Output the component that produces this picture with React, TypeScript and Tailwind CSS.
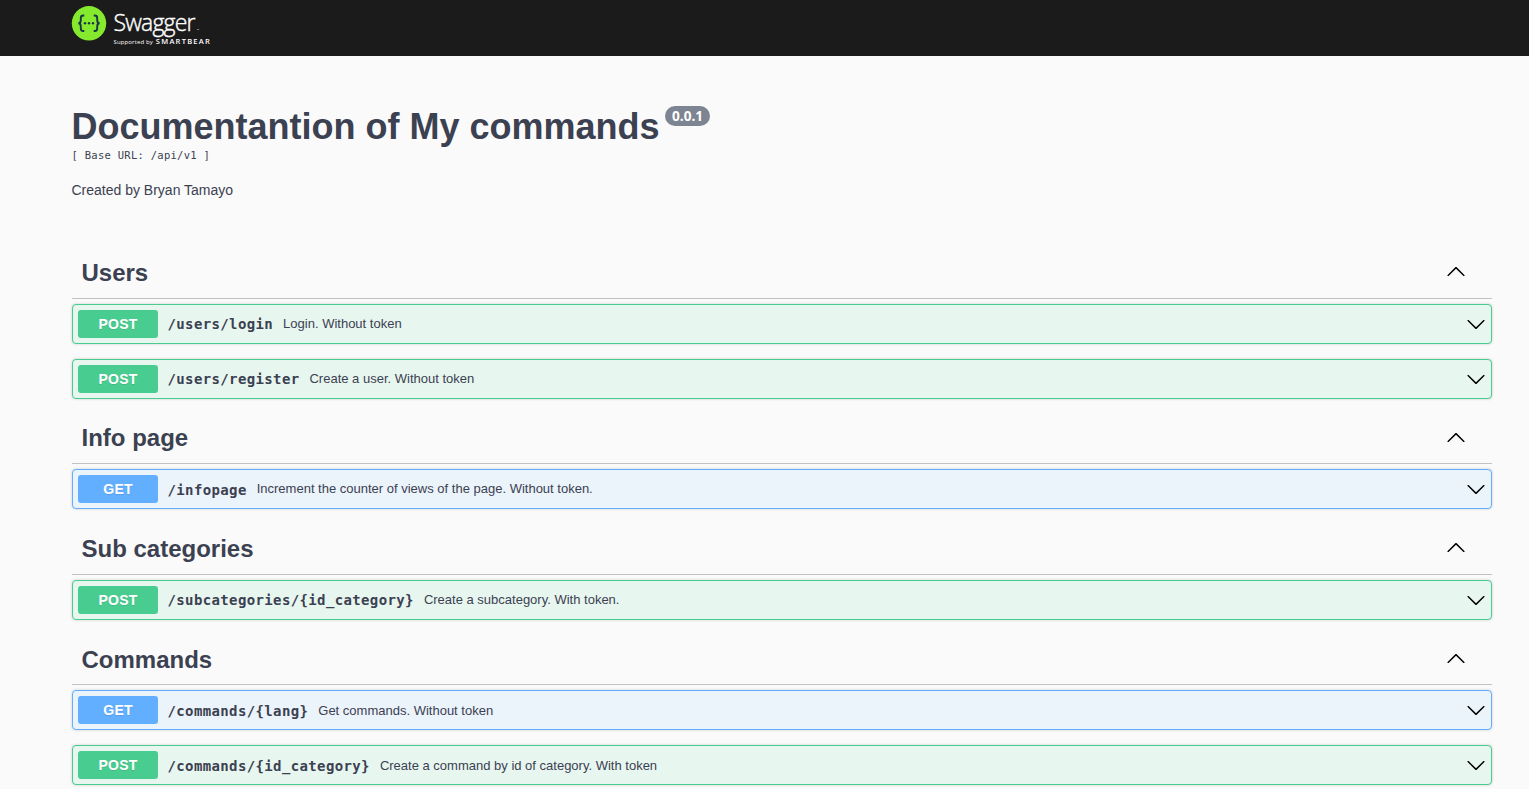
import React from 'react';

type Method = 'POST' | 'GET';
type Operation = { method: Method; path: string; summary: string };
type Section = { name: string; operations: Operation[] };

const sections: Section[] = [
  {
    name: 'Users',
    operations: [
      { method: 'POST', path: '/users/login', summary: 'Login. Without token' },
      { method: 'POST', path: '/users/register', summary: 'Create a user. Without token' },
    ],
  },
  {
    name: 'Info page',
    operations: [
      { method: 'GET', path: '/infopage', summary: 'Increment the counter of views of the page. Without token.' },
    ],
  },
  {
    name: 'Sub categories',
    operations: [
      { method: 'POST', path: '/subcategories/{id_category}', summary: 'Create a subcategory. With token.' },
    ],
  },
  {
    name: 'Commands',
    operations: [
      { method: 'GET', path: '/commands/{lang}', summary: 'Get commands. Without token' },
      { method: 'POST', path: '/commands/{id_category}', summary: 'Create a command by id of category. With token' },
    ],
  },
];

const blockStyles: Record<Method, string> = {
  POST: 'border-[#49cc90] bg-[#e8f6f0]',
  GET: 'border-[#61affe] bg-[#ebf3fb]',
};

const badgeStyles: Record<Method, string> = {
  POST: 'bg-[#49cc90]',
  GET: 'bg-[#61affe]',
};

function Arrow({ down = false }: { down?: boolean }) {
  return (
    <svg viewBox="0 0 20 20" className={down ? 'mt-0.5 size-5 shrink-0 rotate-180' : 'mb-[3px] size-5 shrink-0'} aria-hidden="true">
      <path d="M17.418 14.908C17.69 15.176 18.127 15.176 18.397 14.908C18.667 14.64 18.668 14.207 18.397 13.939L10.489 6.109C10.219 5.841 9.782 5.841 9.51 6.109L1.602 13.939C1.332 14.207 1.332 14.64 1.602 14.908C1.873 15.176 2.311 15.176 2.581 14.908L10 7.767Z" />
    </svg>
  );
}

function Logo() {
  return (
    <div className="flex items-start">
      <svg viewBox="0 0 36 36" className="-ml-px mt-[5px] size-9 shrink-0" aria-hidden="true">
        <circle cx="18" cy="18.3" r="17.2" fill="#85ea2d" />
        <g fill="none" stroke="#173647" strokeWidth="1.9">
          <path d="M13.3 10.5h-1.2c-1.7 0-2.3 1-2.3 2.5v2.2c0 1.8-.7 3-2.4 3.1 1.7.1 2.4 1.3 2.4 3.1v2.1c0 1.5.6 2.500 2.300 2.500h1.200" />
          <path d="M22.7 10.5h1.2c1.7 0 2.3 1 2.3 2.5v2.2c0 1.8.7 3 2.4 3.1-1.7.1-2.4 1.3-2.4 3.1v2.1c0 1.5-.6 2.500-2.300 2.500h-1.200" />
        </g>
        <circle cx="14" cy="18.3" r="1.2" fill="#173647" />
        <circle cx="18" cy="18.3" r="1.2" fill="#173647" />
        <circle cx="22" cy="18.3" r="1.2" fill="#173647" />
      </svg>
      <div className="ml-[6.5px] pt-2 font-['Open_Sans',sans-serif] text-white">
        <div className="flex h-[29px] items-baseline">
          <span className="text-[23px] leading-[29px] font-light tracking-[-0.8px] [-webkit-text-stroke:0.4px_white]">Swagger</span>
          <span className="ml-0.5 text-[3px]">™</span>
        </div>
        <div className="flex items-baseline gap-[3px] leading-[9px] whitespace-nowrap">
          <span className="text-[6px] tracking-[0.13px]">Supported by</span>
          <span className="text-[7.5px] font-semibold tracking-[1.25px]">SMARTBEAR</span>
        </div>
      </div>
    </div>
  );
}

function OperationRow({ method, path, summary }: Operation) {
  return (
    <div className={`mb-[15px] flex h-10 items-center rounded border p-[5px] shadow-[0_0_3px_rgba(0,0,0,0.19)] ${blockStyles[method]}`}>
      <span className={`flex h-7 w-20 shrink-0 items-center justify-center rounded-[3px] text-sm font-bold tracking-[0.2px] text-white [text-shadow:0_1px_0_rgba(0,0,0,0.1)] ${badgeStyles[method]}`}>
        {method}
      </span>
      <span className="ml-[9.5px] pt-0.5 font-['DejaVu_Sans_Mono',monospace] text-[14px] font-bold tracking-[0.37px]">{path}</span>
      <span className="ml-2.5 grow text-[13px]">{summary}</span>
      <Arrow down />
    </div>
  );
}

export default function App() {
  return (
    <div className="h-[789px] overflow-hidden bg-[#fafafa] font-['Liberation_Sans',Arial,sans-serif] text-[#3b4151]">
      <header className="h-14 bg-[#1b1b1b] pl-[72px]">
        <Logo />
      </header>
      <main className="pr-[37px] pl-[72px]">
        <section className="-ml-[0.5px] h-48 pt-[50px]">
          <div className="flex items-start">
            <h1 className="text-[36px] leading-[42px] font-bold">Documentantion of My commands</h1>
            <span className="ml-[5.5px] flex h-5 items-center rounded-full bg-[#7d8492] px-[7px] font-['Open_Sans',sans-serif] text-[13.6px] font-bold text-white">0.0.1</span>
          </div>
          <p className="font-['DejaVu_Sans_Mono',monospace] text-[10.5px] leading-[14px] tracking-[0.28px]">[ Base URL: /api/v1 ]</p>
          <p className="mt-5 text-sm leading-4">Created by Bryan Tamayo</p>
        </section>
        {sections.map((section) => (
          <section key={section.name}>
            <div className="mb-[5px] flex h-[50.6px] items-center justify-between border-b border-[rgba(59,65,81,0.3)] pr-[26px] pl-[9.5px]">
              <h2 className="text-2xl font-bold">{section.name}</h2>
              <Arrow />
            </div>
            {section.operations.map((operation) => (
              <OperationRow key={operation.path} {...operation} />
            ))}
          </section>
        ))}
      </main>
    </div>
  );
}
